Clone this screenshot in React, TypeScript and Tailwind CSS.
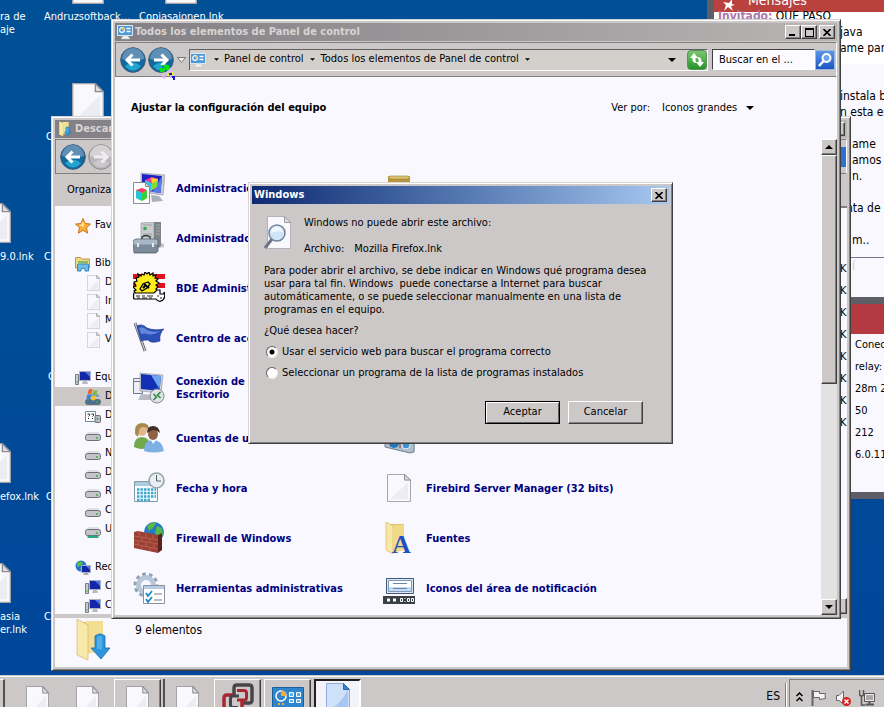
import type { ReactNode } from "react"

const frame =
  "absolute flex flex-col border border-t-[#d8d4d3] border-l-[#d8d4d3] border-r-[#404040] border-b-[#404040] bg-[#cdc8c8] p-[3px] shadow-[inset_1px_1px_0_#fff,inset_-1px_-1px_0_#808080]"
const raised =
  "border border-t-white border-l-white border-r-[#404040] border-b-[#404040] bg-[#cdc8c8] shadow-[inset_-1px_-1px_0_#808080]"
const raisedStack =
  "border border-t-white border-l-white border-r-[#404040] border-b-[#404040] bg-[#cdc8c8] shadow-[inset_-1px_-1px_0_#808080,2px_0_0_#cdc8c8,4px_0_0_#505050]"

function DocIcon({ className }: { className: string }) {
  return (
    <svg viewBox="0 0 24 30" preserveAspectRatio="none" className={className}>
      <path d="M.5.5h17l6 6v23H.5z" fill="#f9f9fd" stroke="#a2a2a8" />
      <path d="M3 27 21 9v18z" fill="#ececf3" />
      <path d="M17.500.5v6h6z" fill="#dcdce4" stroke="#8c8c94" />
    </svg>
  )
}

function PanelIcon({ className }: { className: string }) {
  return (
    <svg viewBox="0 0 16 16" className={className}>
      <path d="M.5 1.500h15v10H.5z" fill="#4f9ad6" stroke="#dceaf5" />
      <circle cx="5" cy="6" r="2.300" fill="none" stroke="#fff" strokeWidth="1.200" />
      <path d="M5 6V3.500A2.500 2.500 0 0 1 7.500 6z" fill="#f3b54a" />
      <path d="M9.500 4.500h4M9.500 7.500h4" stroke="#fff" strokeWidth="1.500" />
      <path d="M6 12h5l2 3H4z" fill="#eef1f5" stroke="#b8bec6" strokeWidth=".5" />
    </svg>
  )
}

function DownloadFolder({ className }: { className: string }) {
  return (
    <svg viewBox="0 0 36 44" className={className}>
      <path d="M8 4h19v30H8z" fill="#e3c768" />
      <path d="M11 3h17v30l-17 3z" fill="#f2df94" />
      <path d="m2 1 11 6v35L2 37z" fill="#f8e9a9" stroke="#cdb05a" strokeWidth=".6" />
      <path d="M20 18q5-4 10 0v12h5L26 41 16 30h4z" fill="#2c95dc" stroke="#1a6cb0" strokeWidth=".8" />
      <path d="M22 19q3-2 5 0v12h-5z" fill="#6dc0f0" opacity=".6" />
    </svg>
  )
}

function Caret({ className = "" }: { className?: string }) {
  return (
    <svg viewBox="0 0 8 4" className={`shrink-0 ${className}`}>
      <path d="M0 0h8L4 4z" fill="#000" />
    </svg>
  )
}

function NavArrow({ forward = false, disabled = false }: { forward?: boolean; disabled?: boolean }) {
  const base = disabled ? "#b9b6b9" : "#12699d"
  return (
    <button type="button" aria-label={forward ? "Adelante" : "Atrás"} className="h-[26px] w-[26px] shrink-0">
      <svg viewBox="0 0 26 26" className="h-full w-full">
        <circle cx="13" cy="13" r="12.300" fill={base} stroke={disabled ? "#8b888c" : "#3b5878"} />
        <path d="M2 12a11 11 0 0 1 22 0Q13 15 2 12z" fill={disabled ? "#d5d2d5" : "#5f8fb4"} />
        <path d="M5 19q8-7 16 0-8 9-16 0z" fill={disabled ? "#cbc8cb" : "#22a6cf"} />
        <g transform={forward ? "translate(26 0) scale(-1 1)" : undefined}>
          <path d="M20 13H8M12.500 7.500 7 13l5.500 5.500" fill="none" stroke={disabled ? "#efedf0" : "#fff"} strokeWidth="3" />
        </g>
      </svg>
    </button>
  )
}

function ComputerIcon() {
  return (
    <svg viewBox="0 0 16 16" className="h-4 w-4 shrink-0">
      <path d="M.5 4.500h3v10h-3z" fill="#c9ccd2" stroke="#777d88" />
      <path d="M1 12h2" stroke="#5db84c" />
      <path d="M4.500 1.500h11v9h-11z" fill="#1526a8" stroke="#aab2c2" />
      <path d="M10 2h5v5z" fill="#4d77e8" />
      <path d="M8 11h4l1 3H7z" fill="#b8bcc6" />
    </svg>
  )
}

function DriveIcon({ kind }: { kind: string }) {
  return (
    <svg viewBox="0 0 16 16" className="h-4 w-4 shrink-0">
      {kind !== "unknown" ? (
        <>
          <path d="m1 8 2-3h10l2 3z" fill={kind === "windows" ? "#7fa3b8" : "#dfe0e4"} />
          <rect
            x=".5"
            y={kind === "windows" ? "10.500" : "7.500"}
            width="15"
            height={kind === "windows" ? "5" : "6"}
            rx="2"
            fill={kind === "windows" ? "#4a7391" : "#c3c5cb"}
            stroke="#6c6f78"
          />
          <path d={kind === "windows" ? "M12 12v2" : "M12 10v2"} stroke="#3fae3c" strokeWidth="1.500" />
        </>
      ) : (
        <>
          <path d="M.5 3.500h10v10H.5z" fill="#fff" stroke="#6f8d98" />
          <path d="M2.500 6h2v1.500l-1 1M6.500 6h2v1.500l-1 1M3 10.500h1M7 10.500h1" fill="none" stroke="#222" />
          <rect x="10" y="7.500" width="5.500" height="7" rx="1" fill="#b7b9c0" stroke="#6c6f78" />
          <path d="M12.500 10v2" stroke="#3fae3c" strokeWidth="1.500" />
        </>
      )}
      {kind === "windows" && (
        <>
          <path d="M3.500 1q2-1.500 4-.5L6.500 5q-2-1-4 .5z" fill="#e8622a" />
          <path d="M8.500 1q2 1 4 0l-1 4.500q-2 1-4-.5z" fill="#7bbb3c" />
          <path d="M2.200 6.500q2-1.500 4-.5l-1 4.500q-2-1-4 .5z" fill="#3a86d8" />
          <path d="M7.200 6.500q2 1 4 0l-1 4.500q-2 1-4-.5z" fill="#f5c131" />
        </>
      )}
      {kind === "network" && <path d="M6.500 13h3v1h4v2h-11v-2h4z" fill="#2aa783" />}
    </svg>
  )
}

function TreeIcon({ kind }: { kind: string }) {
  switch (kind) {
    case "star":
      return (
        <svg viewBox="0 0 16 16" className="h-4 w-4 shrink-0">
          <path d="m8 .5 2.200 5 5.300.6-4 3.600 1.200 5.500L8 12.300l-4.700 2.900 1.200-5.500-4-3.600 5.300-.6z" fill="#f9ae3c" stroke="#c9761c" />
          <path d="m8 3 1.300 3.500L8 9 4 7l2.800-.4z" fill="#ffdf9a" />
        </svg>
      )
    case "library":
      return (
        <svg viewBox="0 0 16 16" className="h-4 w-4 shrink-0">
          <path d="M.5 1.500h5l1 1.500h8v9H.5z" fill="#f1d884" stroke="#b89b4a" />
          <path d="M3 5h10v2H3z" fill="#7dbf68" />
          <path d="M2.500 15V9q0-1 1-1h9q1 0 1 1v6H10v-2q-2-2-4 0v2z" fill="#6dbdea" stroke="#3585bf" />
        </svg>
      )
    case "doc":
      return <DocIcon className="h-4 w-[13px] shrink-0" />
    case "computer":
      return <ComputerIcon />
    case "globe":
      return (
        <svg viewBox="0 0 16 16" className="h-4 w-4 shrink-0">
          <circle cx="6" cy="6" r="5.500" fill="#2375c8" />
          <path d="M2 3q4-3 6 0L5 6 2 7zM5 8l4 1-2 3z" fill="#5ebd44" />
          <path d="M6.500 5.500h9v7h-9z" fill="#1526a8" stroke="#aab2c2" />
          <path d="M11 6h4v4z" fill="#4d77e8" />
          <path d="M9 13h4l1 2H8z" fill="#a9adb8" />
        </svg>
      )
    default:
      return <DriveIcon kind={kind} />
  }
}

function AppletIcon({ kind }: { kind: string }) {
  const cls = "h-8 w-8 shrink-0"
  switch (kind) {
    case "color":
      return (
        <svg viewBox="0 0 32 32" className={cls}>
          <path d="m8 1 24 2-2 20-22-3z" fill="#c8ccd6" stroke="#8c92a2" strokeWidth=".6" />
          <path d="m9 2 20 2-1.500 17L9 18z" fill="#1a22c4" />
          <path d="m29 4-1.500 17-8-1z" fill="#5a78e4" />
          <path d="m12 8 7-3 6 2-1 8-6 4-6-3z" fill="#f03c8c" />
          <path d="m18 6 7 1-1 8-5-3z" fill="#ffd21e" />
          <path d="m12 8 6 3v8l-6-3z" fill="#28c8f0" />
          <path d="m18 12 6-3v6l-6 4z" fill="#7ddc3c" />
          <path d="m18 23 8 1 4 5-11 1z" fill="#aab0bb" />
          <path d="M.5 10.500h12l4 4v17H.5z" fill="#fff" stroke="#8a8c94" />
          <path d="M12.500 10.500v4h4z" fill="#ddd" stroke="#8a8c94" />
          <path d="m3 18 6-2 5 2v8l-5 3-6-3z" fill="#f0e01e" />
          <path d="m3 18 6 3v8l-6-3z" fill="#1ec8dc" />
          <path d="m9 21 5-3v8l-5 3z" fill="#32d23c" />
          <path d="m3 18 6-2 5 2-5 3z" fill="#f03c78" />
        </svg>
      )
    case "devices":
      return (
        <svg viewBox="0 0 32 32" className={cls}>
          <path d="m16 28 15-3v-3l-5-2z" fill="#c4c6cc" />
          <path d="m8 1 13-1v27H8z" fill="#c9cdd0" stroke="#8a9094" strokeWidth=".6" />
          <path d="M21 0h7v24l-7 4z" fill="#7e858a" />
          <path d="M23 3h4M23 6h4M23 9h4M23 12h4" stroke="#a4aaae" />
          <path d="M10 3h9M10 12h9M10 14h9" stroke="#9aa0a4" />
          <circle cx="12" cy="6.500" r="1.800" fill="#39a845" />
          <path d="M9 18v-3q4-3 8 0v3" fill="none" stroke="#333" strokeWidth="1.300" />
          <path d="M0 18.500 3 17h20l2 1.500V29l-2 2H1z" fill="#7c8c9b" stroke="#46525e" strokeWidth=".7" />
          <path d="M.5 18.500 3 17.500h20l1.500 1v4H.5z" fill="#a9b8c6" />
          <path d="M5 21v4M20 21v4" stroke="#e6ebef" strokeWidth="2" />
        </svg>
      )
    case "bde":
      return (
        <svg viewBox="0 0 32 32" className={cls}>
          <path d="M0 2h32v5H0zM0 11h32v5H0z" fill="#e0141c" />
          <path
            d="m8 4 1-2 2 1 1-3 2 2 2-2 1 3 3-2v3l3-1-1 3 3 1-2 2 3 2-3 2 2 2-2 2 1 3v2H3l-2-3 2-1-3-3 3-1-2-4 3-1-1-3 3-1-1-3z"
            fill="#ffec1c"
            stroke="#000"
            strokeWidth="1.200"
          />
          <path d="m7 17 3-5 5-2 2 2-3 4-5 3z" fill="#ffec1c" stroke="#000" strokeWidth="1.300" />
          <path d="m11 12 5 4M10 16l2-2" stroke="#000" strokeWidth="2" />
          <path d="M1 21h20l3-3h3v4h4v-2q2 4-1 8-4 3-7-1H1q-1-3 0-6z" fill="#fff" stroke="#000" strokeWidth="1.200" />
          <path d="M3 24h4M9 24h3M14 24h6M4 26h3M9 26h5M16 26h3M24 24h2M27 26h2" stroke="#222" />
        </svg>
      )
    case "flag":
      return (
        <svg viewBox="0 0 32 32" className={cls}>
          <path d="m2 1 10 28" stroke="#6d7178" strokeWidth="3" />
          <path d="m2 1 10 28" stroke="#d4d6da" />
          <path d="M4 4q5-3 10 2 7 3 17 1-5 4-4 12-9 3-12-1-4 0-7 1z" fill="#2b50b8" stroke="#1a348c" strokeWidth=".6" />
          <path d="M6 6q4-2 8 2 6 3 13 1-7 5-13 3-3-1-6 0z" fill="#7b9ce8" opacity=".7" />
        </svg>
      )
    case "remote":
      return (
        <svg viewBox="0 0 32 32" className={cls}>
          <path d="M.5 6.500h9v15h-9z" fill="#eef0f8" stroke="#6e7694" />
          <path d="M1 9.500h8" stroke="#6e7694" />
          <path d="m7 1 23 2-2 18-21-2z" fill="#ccd0da" stroke="#8c92a2" strokeWidth=".6" />
          <path d="m8 2 20 2-1.500 15L8 17z" fill="#1230b4" />
          <path d="m18 3 10 1-1.500 13z" fill="#6fa4f0" />
          <path d="m8 22 14 1v5H5z" fill="#b8bcc6" />
          <circle cx="24" cy="24" r="7" fill="#dfe3e6" stroke="#7f868c" />
          <path d="m20.500 22 3 3-3 3M27.500 20l-3 3 3 3" fill="none" stroke="#2d8c46" strokeWidth="1.600" />
        </svg>
      )
    case "users":
      return (
        <svg viewBox="0 0 32 32" className={cls}>
          <path d="M1 25q0-10 8-10t8 10q-8 4-16 0z" fill="#74a84c" />
          <ellipse cx="9" cy="8" rx="5" ry="6" fill="#e2b78f" />
          <path d="M2 12Q1 1 9 1t7 8q-1-3-5-4-5 0-5 5l-1 5z" fill="#a98a4c" />
          <path d="M11 29q0-11 9-11t11 11q-10 3-20 0z" fill="#7fb0e4" />
          <ellipse cx="20" cy="12" rx="5" ry="6" fill="#8f6044" />
          <path d="M14 11q0-7 6-7t7 7q-3-3-6-3t-7 3z" fill="#3c3029" />
          <path d="m18 18 2 4 3-4z" fill="#fff" />
        </svg>
      )
    case "clock":
      return (
        <svg viewBox="0 0 32 32" className={cls}>
          <path d="M1.500 9.500h23v20h-23z" fill="#f4fbff" stroke="#8799a6" />
          <path d="M2 10h22v4H2z" fill="#a8cede" />
          <path d="M4 17.500h19M4 21h19M4 24.500h19M4 28h14" stroke="#3aa6cc" strokeWidth="2.400" strokeDasharray="2.400 1.100" />
          <circle cx="23.500" cy="8.500" r="7.500" fill="#e9eef2" stroke="#9ba3aa" strokeWidth="1.600" />
          <path d="M23.500 3v6h4.500" fill="none" stroke="#526470" />
        </svg>
      )
    case "firewall":
      return (
        <svg viewBox="0 0 32 32" className={cls}>
          <circle cx="21" cy="10" r="10" fill="#2478c4" />
          <path d="M14 4q5-5 9-3l-3 5-4 3zM24 4l5 2 1 7-4 3-4-5z" fill="#55b948" />
          <path d="m1 10 4-1 20 4v18L1 26z" fill="#9c4034" />
          <path d="m25 13 4-2v17l-4 3z" fill="#5e221c" />
          <path d="m1 14 24 4M1 18l24 4M1 22l24 5M6 10v5M13 11v5M20 13v4M9 16v4M17 17v4M5 19v4M13 20v5M21 22v4M9 24v4M17 25v4" stroke="#b8685a" strokeWidth=".8" />
        </svg>
      )
    case "tools":
      return (
        <svg viewBox="0 0 32 32" className={cls}>
          <circle cx="13" cy="13" r="10.500" fill="none" stroke="#8f9fb2" strokeWidth="4" strokeDasharray="3.500 3" />
          <circle cx="13" cy="13" r="7.500" fill="none" stroke="#b7c6d8" strokeWidth="5" />
          <path d="M10.500 13.500h21v18h-21z" fill="#fff" stroke="#8b909c" />
          <path d="M11 14h20v3H11z" fill="#b9cbe0" />
          <path d="m13 21 2 3 4-5M13 27l2 3 4-5" fill="none" stroke="#1c86c8" strokeWidth="1.800" />
          <path d="M21 22h8M21 28h8" stroke="#777d88" />
        </svg>
      )
    case "box":
      return (
        <svg viewBox="0 0 32 32" className={cls}>
          <path d="M5 5q0-1 2-1h18q2 0 2 1v24H5z" fill="#b8963e" />
          <path d="M5 6q0-2 3-2h16q3 0 3 2l-3 1H8z" fill="#dcc478" stroke="#9c7c2c" strokeWidth=".6" />
        </svg>
      )
    case "scanner":
      return (
        <svg viewBox="0 0 32 32" className={cls}>
          <path d="m2 20 27-2q3 1 2 12l-4 1L2 25z" fill="#aebccb" stroke="#73808e" />
          <circle cx="11" cy="21" r="5" fill="#2378b8" />
          <circle cx="23" cy="23" r="4" fill="#3c8fd0" stroke="#e7f0f7" />
          <path d="M17 18v8" stroke="#8e3c3c" />
        </svg>
      )
    case "fonts":
      return (
        <svg viewBox="0 0 32 32" className={cls}>
          <path d="M6 2h15v26H6z" fill="#e2c665" />
          <path d="m3 0 7 4v28l-7-4z" fill="#f8e8a6" stroke="#cdb05a" strokeWidth=".6" />
          <path d="M10 3h11v25l-11 3z" fill="#f0da88" />
          <text x="9" y="31" fill="#1f4fc4" fontFamily="Liberation Serif, serif" fontSize="26" fontWeight="bold">
            A
          </text>
        </svg>
      )
    case "tray":
      return (
        <svg viewBox="0 0 32 32" className={cls}>
          <path d="M3.500 6.500h27v15h-27z" fill="#dce9f6" stroke="#3d5878" />
          <path d="M5.500 8.500h23v11h-23z" fill="#fff" stroke="#7c98b8" />
          <path d="M6 15h22v4H6z" fill="#c4dcf4" />
          <path d="M10 11.500h14M10 16.500h14" stroke="#6b89ac" />
          <path d="M0 24h32v8H0z" fill="#3a3e46" />
          <path d="M4 26.500h3v3H4zM10 26.500h3v3h-3z" fill="#fff" />
          <path d="M17.500 26.500h2v3h-2zM24.500 26.500h2v3h-2zM28.500 26.500h2v3h-2zM22 26v1M22 29v1" fill="none" stroke="#fff" />
        </svg>
      )
    case "doc":
      return (
        <span className="flex w-8 shrink-0 justify-center">
          <DocIcon className="h-7 w-6" />
        </span>
      )
    default:
      return <span className={cls} />
  }
}

const desktopItems = [
  { doc: "", label: ["ra de", "aje"], text: "left-0 top-[10px]" },
  { doc: "left-[72px] top-[-36px]", label: ["Andruzsoftback..."], text: "left-[44px] top-[10px]" },
  { doc: "left-[165px] top-[-36px]", label: ["Copiasajonen.lnk"], text: "left-[139px] top-[10px]" },
  { doc: "left-[72px] top-[83px]", label: ["C"], text: "left-[46px] top-[130px]" },
  { doc: "left-[-21px] top-[203px]", label: ["9.0.lnk"], text: "left-0 top-[250px]" },
  { doc: "", label: ["C"], text: "left-[44px] top-[250px]" },
  { doc: "", label: ["C"], text: "left-[48px] top-[370px]" },
  { doc: "left-[-21px] top-[443px]", label: ["efox.lnk"], text: "left-0 top-[490px]" },
  { doc: "", label: ["C"], text: "left-[46px] top-[490px]" },
  { doc: "left-[-21px] top-[563px]", label: ["asia", "er.lnk"], text: "left-0 top-[610px]" },
  { doc: "", label: ["C"], text: "left-[44px] top-[610px]" },
]

const tree = [
  { icon: "star", label: "Favoritos", level: 0 },
  null,
  { icon: "library", label: "Bibliotecas", level: 0 },
  { icon: "doc", label: "D", level: 1 },
  { icon: "doc", label: "Im", level: 1 },
  { icon: "doc", label: "M", level: 1 },
  { icon: "doc", label: "V", level: 1 },
  null,
  { icon: "computer", label: "Equipo", level: 0 },
  { icon: "windows", label: "D", level: 1, selected: true },
  { icon: "unknown", label: "D", level: 1 },
  { icon: "drive", label: "D", level: 1 },
  { icon: "drive", label: "N", level: 1 },
  { icon: "drive", label: "D", level: 1 },
  { icon: "drive", label: "R", level: 1 },
  { icon: "drive", label: "C", level: 1 },
  { icon: "network", label: "U", level: 1 },
  null,
  { icon: "globe", label: "Red", level: 0 },
  { icon: "computer", label: "C", level: 1 },
  { icon: "computer", label: "C", level: 1 },
]

const applets = [
  { icon: "color", label: "Administració" },
  { icon: "box", label: "" },
  { icon: "devices", label: "Administrado" },
  { icon: "", label: "" },
  { icon: "bde", label: "BDE Administ" },
  { icon: "", label: "" },
  { icon: "flag", label: "Centro de acc" },
  { icon: "", label: "" },
  { icon: "remote", label: "Conexión de\nEscritorio" },
  { icon: "", label: "" },
  { icon: "users", label: "Cuentas de us" },
  { icon: "scanner", label: "" },
  { icon: "clock", label: "Fecha y hora" },
  { icon: "doc", label: "Firebird Server Manager (32 bits)" },
  { icon: "firewall", label: "Firewall de Windows" },
  { icon: "fonts", label: "Fuentes" },
  { icon: "tools", label: "Herramientas administrativas" },
  { icon: "tray", label: "Iconos del área de notificación" },
]

const messages = [
  { text: "java", indent: "pl-[126px]" },
  { text: "ame para", indent: "pl-[126px]" },
  { text: "", indent: "" },
  { text: "", indent: "" },
  { text: "instala bi", indent: "pl-[126px]" },
  { text: "n esta es", indent: "pl-[126px]" },
  { text: "", indent: "" },
  { text: "ame", indent: "pl-[138px]" },
  { text: "amos", indent: "pl-[138px]" },
  { text: "n.", indent: "pl-[138px]" },
  { text: "", indent: "" },
  { text: "nta de", indent: "pl-[132px]" },
  { text: "", indent: "" },
  { text: "m..", indent: "pl-[138px]" },
]

const session = ["Conectado", "relay:", "28m 29s", "50", "212", "6.0.11"]

function DesktopIcons() {
  return (
    <>
      {desktopItems.map((item, i) => (
        <div key={i} className="text-white">
          {item.doc && <DocIcon className={`absolute h-10 w-8 ${item.doc}`} />}
          <p className={`absolute leading-[13px] whitespace-nowrap ${item.text}`}>
            {item.label.map((line) => (
              <span key={line} className="block">
                {line}
              </span>
            ))}
          </p>
        </div>
      ))}
    </>
  )
}

function MessagesPanel() {
  return (
    <aside className="absolute top-0 right-0 left-[707px] flex h-[499px] flex-col overflow-hidden border-b-[7px] border-l-[7px] border-[#5e5e66] bg-[#f9f8ff] text-xs whitespace-nowrap">
      <header className="flex h-3 shrink-0 items-end gap-3 overflow-hidden bg-[#b9423f] pl-2 text-white">
        <svg viewBox="0 0 14 14" className="h-[14px] w-[14px] shrink-0">
          <path d="m1 4 6 1 3-4v5l3 1-4 1 2 5-5-4-4 4 2-6z" fill="#fff" />
        </svg>
        <span className="text-sm leading-6">Mensajes</span>
      </header>
      <div className="h-[246px] shrink-0 border-b border-[#77778c] bg-linear-to-b from-white from-[52px] to-[#f9f8ff] to-[52px] leading-4">
        <p className="-mt-1 pl-1">
          <strong className="text-[#a878a8]">Invitado:</strong> QUE PASO
        </p>
        {messages.map((m, i) => (
          <p key={i} className={`h-4 ${m.indent}`}>
            {m.text}
          </p>
        ))}
      </div>
      <p className="h-[39px] shrink-0 pl-[138px] text-[#ccc]">í</p>
      <div className="h-[7px] shrink-0 bg-[#5e5e66]" />
      <div className="h-[30px] shrink-0 bg-[#b23a40]" />
      <ul className="pl-[141px] text-[11px] leading-[22px]">
        {session.map((line) => (
          <li key={line}>{line}</li>
        ))}
      </ul>
    </aside>
  )
}

function CloseButton({ className = "" }: { className?: string }) {
  return (
    <button type="button" aria-label="Cerrar" className={`flex h-[14px] w-4 items-center justify-center ${raised} ${className}`}>
      <svg viewBox="0 0 8 7" className="h-[7px] w-2">
        <path d="m.5 0 7 7m0-7-7 7" stroke="#000" strokeWidth="1.600" />
      </svg>
    </button>
  )
}

function TitleBar({ icon, title }: { icon: ReactNode; title: string }) {
  return (
    <div className="flex h-[18px] shrink-0 items-center gap-0.5 bg-linear-to-r from-[#828084] to-[#b8b5b4] px-0.5 font-bold text-[#d8d4d3]">
      {icon}
      <span className="flex-1 whitespace-nowrap">{title}</span>
      <div className="flex">
        <button type="button" aria-label="Minimizar" className={`flex h-[14px] w-4 items-end pb-[2px] pl-[3px] ${raised}`}>
          <span className="h-[2px] w-[6px] bg-black" />
        </button>
        <button type="button" aria-label="Maximizar" className={`flex h-[14px] w-4 items-center justify-center ${raised}`}>
          <span className="h-[9px] w-[9px] border border-t-2 border-black" />
        </button>
        <CloseButton className="ml-0.5" />
      </div>
    </div>
  )
}

function DownloadsWindow() {
  return (
    <section className={`${frame} top-[116px] left-[51px] h-[555px] w-[800px]`}>
      <TitleBar icon={<DownloadFolder className="h-4 w-4" />} title="Descargas" />
      <div className="mt-px flex h-[35px] shrink-0 items-center gap-0.5 border border-t-[#808080] border-l-[#808080] border-r-white border-b-[#808080] pl-1">
        <NavArrow />
        <NavArrow forward disabled />
        <span className="flex-1" />
        <button type="button" aria-label="Buscar" className="h-5 w-5 bg-[#2f6fd0]" />
      </div>
      <div className="flex h-8 shrink-0 items-center pl-3">Organizar</div>
      <div className="flex h-[408px] shrink-0 overflow-hidden bg-[#f9f8ff]">
        <nav className="w-[200px] pt-[10px]">
          <ul>
            {tree.map((node, i) =>
              node ? (
                <li
                  key={i}
                  className={`flex h-[19px] items-center gap-1 ${node.level ? "pl-[30px]" : "pl-5"} ${node.selected ? "bg-[#cdc8c8]" : ""}`}
                >
                  <span className="flex w-4 justify-center">
                    <TreeIcon kind={node.icon} />
                  </span>
                  {node.label}
                </li>
              ) : (
                <li key={i} className="h-[19px]" />
              ),
            )}
          </ul>
        </nav>
        <div className="flex-1" />
        <div className="flex w-[7px] flex-col overflow-hidden border-t-2 border-[#808080] pt-[50px]">
          {Array.from({ length: 8 }, (_, i) => (
            <span key={i} className="h-[22px] shrink-0 leading-[22px]">
              K
            </span>
          ))}
          <span className={`mt-auto h-4 ${raised}`} />
        </div>
      </div>
      <footer className="flex flex-1 items-start gap-6 border-t-4 border-[#cdc8c8] bg-[#f9f8ff] pl-5">
        <DownloadFolder className="h-11 w-9" />
        <span className="pt-1 text-xs">9 elementos</span>
      </footer>
    </section>
  )
}

function ControlPanelWindow() {
  return (
    <section className={`${frame} top-[19px] left-[111px] h-[600px] w-[730px]`}>
      <TitleBar icon={<PanelIcon className="h-4 w-4" />} title="Todos los elementos de Panel de control" />
      <div className="mt-px flex h-[35px] shrink-0 items-center border border-t-[#808080] border-l-[#808080] border-r-white border-b-[#808080] pr-px pl-1">
        <NavArrow />
        <span className="w-0.5" />
        <NavArrow forward />
        <svg viewBox="0 0 9 6" className="mx-[3px] h-[6px] w-[9px] shrink-0">
          <path d="M.5.5h8l-4 5z" fill="#eee" stroke="#777" />
        </svg>
        <div className="flex h-[22px] flex-1 items-center border border-t-[#606060] border-l-[#606060] border-r-white border-b-white bg-[#d3cfca] whitespace-nowrap">
          <PanelIcon className="h-4 w-4 shrink-0" />
          <Caret className="mr-[5px] ml-2 h-[3px] w-[5px]" />
          <span>Panel de control</span>
          <Caret className="mx-1.5 h-[3px] w-[5px]" />
          <span>Todos los elementos de Panel de control</span>
          <Caret className="mx-1.5 h-[3px] w-[5px]" />
          <Caret className="mr-[11px] ml-auto h-1 w-2" />
          <button type="button" aria-label="Actualizar" className="h-5 w-5 rounded-sm border border-[#57945a] bg-linear-to-b from-[#7cc66f] to-[#1d9426]">
            <svg viewBox="0 0 18 18" className="h-full w-full">
              <path d="m6 2 4 5H7.500v2q0 2 2 2.500Q4.500 13 4.500 8V7H2z" fill="#fff" />
              <path d="m12 16-4-5h2.500V9q0-2-2-2.500Q13.500 5 13.500 10v1H16z" fill="#fff" />
            </svg>
          </button>
        </div>
        <input
          type="text"
          aria-label="Buscar"
          defaultValue="Buscar en el ..."
          className="ml-1 h-[21px] w-[103px] border border-t-[#404040] border-l-[#404040] border-r-white border-b-white bg-[#fcfbff] px-[6px]"
        />
        <button type="button" aria-label="Iniciar búsqueda" className="h-5 w-5 border border-[#9bb9e0] bg-linear-to-b from-[#5d95e4] to-[#1c55c4]">
          <svg viewBox="0 0 18 18" className="h-full w-full">
            <circle cx="10.500" cy="7" r="4" fill="#6fa5ea" stroke="#fff" strokeWidth="2" />
            <path d="m7.500 10-4.500 5" stroke="#fff" strokeWidth="2.500" />
          </svg>
        </button>
      </div>
      <div className="flex min-h-0 flex-1 flex-col bg-[#f9f8ff]">
        <header className="flex h-[62px] shrink-0 items-center pr-[83px] pl-4">
          <h1 className="flex-1 font-bold">Ajustar la configuración del equipo</h1>
          <label htmlFor="view">Ver por:</label>
          <select id="view" className="ml-3 appearance-none">
            <option>Iconos grandes</option>
          </select>
          <Caret className="ml-2 h-1 w-2" />
        </header>
        <div className="flex min-h-0 flex-1">
          <div className="grid flex-1 auto-rows-[50px] grid-cols-[250px_1fr] overflow-hidden pt-6 pl-[18px]">
            {applets.map((item, i) =>
              item.label ? (
                <a key={i} href="#" className="flex items-center gap-[11px] leading-[13px] font-bold whitespace-pre text-[#000080]">
                  <AppletIcon kind={item.icon} />
                  {item.label}
                </a>
              ) : (
                <div key={i} className="flex items-center">
                  <AppletIcon kind={item.icon} />
                </div>
              ),
            )}
          </div>
          <div className="flex w-4 flex-col bg-[#e4e1e3]">
            <button type="button" aria-label="Subir" className={`flex h-4 items-center justify-center ${raised}`}>
              <Caret className="h-1 w-2 rotate-180" />
            </button>
            <div className={`h-[229px] ${raised}`} />
            <button type="button" aria-label="Bajar" className={`mt-auto flex h-4 items-center justify-center ${raised}`}>
              <Caret className="h-1 w-2" />
            </button>
          </div>
        </div>
      </div>
    </section>
  )
}

const radio =
  "h-3 w-3 appearance-none rounded-full border border-t-[#606060] border-l-[#606060] border-r-[#eee] border-b-[#eee] bg-white checked:bg-[radial-gradient(circle,#000_2px,#fff_3px)]"

function OpenFileDialog() {
  return (
    <section role="dialog" aria-label="Windows" className={`${frame} top-[182px] left-[248px] h-[262px] w-[425px]`}>
      <div className="flex h-[18px] shrink-0 items-center justify-between bg-linear-to-r from-[#0f2a72] to-[#a6c8f0] px-0.5 font-bold text-white">
        Windows
        <CloseButton />
      </div>
      <form className="flex flex-1 flex-col px-3 pt-3">
        <div className="flex gap-3">
          <svg viewBox="0 0 28 34" className="h-[34px] w-7">
            <path d="M3.500.5h17l6 6v26h-23z" fill="#f8f8fd" stroke="#b2b2bc" />
            <path d="M20.500.5v6h6z" fill="#dcdce6" stroke="#9a9aa6" />
            <path d="m8 23-7 9" stroke="#6c7684" strokeWidth="3" />
            <circle cx="13" cy="17" r="8" fill="#cfe4f7" stroke="#73839a" strokeWidth="1.500" />
            <path d="M7 17a6 6 0 0 1 12-1q-6-2-12 1z" fill="#f0f8ff" />
          </svg>
          <div className="leading-[13px]">
            <p>Windows no puede abrir este archivo:</p>
            <p className="mt-[13px] flex gap-2.5">
              <span>Archivo:</span>
              <span>Mozilla Firefox.lnk</span>
            </p>
          </div>
        </div>
        <p className="mt-[9px] leading-[13px] whitespace-pre">
          {
            "Para poder abrir el archivo, se debe indicar en Windows qué programa desea\nusar para tal fin. Windows  puede conectarse a Internet para buscar\nautomáticamente, o se puede seleccionar manualmente en una lista de\nprogramas en el equipo."
          }
        </p>
        <fieldset className="mt-2">
          <legend className="leading-[13px]">¿Qué desea hacer?</legend>
          <div className="mt-2 flex flex-col gap-2 pl-0.5">
            <label className="flex items-center gap-1 leading-[13px]">
              <input type="radio" name="action" defaultChecked className={radio} />
              Usar el servicio web para buscar el programa correcto
            </label>
            <label className="flex items-center gap-1 leading-[13px]">
              <input type="radio" name="action" className={radio} />
              Seleccionar un programa de la lista de programas instalados
            </label>
          </div>
        </fieldset>
        <div className="mt-auto mb-4 flex justify-end gap-2 pr-[14px]">
          <button type="button" className="h-[23px] w-[75px] border border-black bg-[#cdc8c8] shadow-[inset_1px_1px_0_#fff,inset_-1px_-1px_0_#606060]">
            Aceptar
          </button>
          <button type="button" className={`h-[23px] w-[75px] ${raised}`}>
            Cancelar
          </button>
        </div>
      </form>
    </section>
  )
}

function BusyPointer() {
  return (
    <svg viewBox="0 0 18 16" className="absolute top-[64px] left-[159px] h-4 w-[18px]" shapeRendering="crispEdges">
      <path d="M2 1h8l1 3-2 3-3-1-2 2H1z" fill="#0ce01a" />
      <path d="M3 2h2v2H3z" fill="#0a7ad0" />
      <path d="m9 6 3-3 1 3-2 4zM2 13l4-2v4zM10 13l2-2v4z" fill="#d8b8f8" />
      <path d="M10 9h3v2h-3zM13 12h3v4h-2v-2h-1z" fill="#1414c8" />
      <path d="M8 9h2v3H8zM13 8h2v3h-2z" fill="#f4f01c" />
    </svg>
  )
}

const tasks = [
  { kind: "doc", name: "Documento", style: "pt-[7px]" },
  { kind: "doc", name: "Documento", style: "pt-[7px]" },
  { kind: "doc", name: "Documentos", style: `pt-[6px] ${raisedStack}` },
  { kind: "doc", name: "Documento", style: "pt-[7px]" },
  { kind: "vnc", name: "VNC", style: `pt-[3px] ${raised}` },
  { kind: "panel", name: "Panel de control", style: `pt-[3px] ${raised}` },
  {
    kind: "active",
    name: "Archivo",
    style: "border-2 border-t-[#202020] border-l-[#202020] border-r-white border-b-white bg-[#f4f3fa] pt-px",
  },
]

function TaskIcon({ kind }: { kind: string }) {
  switch (kind) {
    case "vnc":
      return (
        <svg viewBox="0 0 32 32" className="h-8 w-8">
          <path d="M12 14V5q0-3 3-3h12q3 0 3 3v12q0 3-3 3h-6" fill="none" stroke="#45454a" strokeWidth="3.500" />
          <path d="M11 12H5q-3 0-3 3v12q0 3 3 3h12q3 0 3-3V16" fill="none" stroke="#a92733" strokeWidth="3.500" />
          <path d="M15 7.500h7q2.500 0 2.500 2.500v5q0 2-2.500 2h-7" fill="none" stroke="#a92733" strokeWidth="3" />
          <path d="M17 13h-6q-2.500 0-2.500 2.500v6q0 3 2.500 3h5" fill="none" stroke="#45454a" strokeWidth="3" />
        </svg>
      )
    case "panel":
      return (
        <svg viewBox="0 0 32 32" className="mt-1 h-8 w-8">
          <path d="M.5.5h31v22H.5z" fill="#2f86cc" stroke="#1d5f9c" />
          <circle cx="9" cy="9" r="5" fill="none" stroke="#fff" strokeWidth="1.500" />
          <path d="M9 9V3.500A5.500 5.500 0 0 1 14.500 9z" fill="#f5ab34" />
          <path d="M17.500 5.500h4v4h-4zM24.500 5.500h4v4h-4zM17.500 12.500h4v3h-4zM24.500 12.500h4v3h-4z" fill="#61aee4" stroke="#fff" />
          <path d="M6 17h2M10 17h2" stroke="#f5ab34" strokeWidth="2" />
          <path d="M12 20h8v5h-8z" fill="#eef1f5" />
        </svg>
      )
    case "active":
      return (
        <svg viewBox="0 0 24 30" className="h-8 w-6">
          <path d="M.5.5h17l6 6v23H.5z" fill="#cfe0f9" stroke="#93aede" />
          <path d="M2 28Q16 20 22 6v22z" fill="#a9c5f2" />
          <path d="M17.500.5v6h6z" fill="#3a83d6" stroke="#2a68b4" />
        </svg>
      )
    default:
      return <DocIcon className="h-8 w-[23px]" />
  }
}

function Taskbar() {
  return (
    <footer className="flex h-8 shrink-0 overflow-hidden border-t border-[#cdc8c8] bg-[#cdc8c8] pt-[3px] shadow-[inset_0_1px_0_#fff]">
      <div className="mr-[9px] w-[5px] border-t border-r-2 border-t-white border-r-[#505050]" />
      <div className="flex flex-1 gap-[3px]">
        {tasks.map((task, i) => (
          <button key={i} type="button" aria-label={task.name} className={`flex h-9 w-[47px] justify-center ${task.style}`}>
            <TaskIcon kind={task.kind} />
          </button>
        ))}
      </div>
      <span className="pt-[9px] pr-[5px] text-xs leading-4">ES</span>
      <div className="mt-1 mr-0.5 w-0.5 border-l border-[#808080] bg-white" />
      <div className="flex w-[95px] items-start gap-2 border-t border-l border-[#808080] pt-[10px] pl-1.5">
        <svg viewBox="0 0 7 10" className="mt-0.5 h-[10px] w-[7px] shrink-0">
          <path d="m.5 4 3-3 3 3M.5 9l3-3 3 3" fill="none" stroke="#000" strokeWidth="1.500" />
        </svg>
        <svg viewBox="0 0 16 16" className="h-4 w-4 shrink-0">
          <path d="M1.500 0v16" stroke="#666" strokeWidth="2" />
          <path d="M2.500 1.500h6v2h6q-1 2 0 5l-6 1v-2h-6z" fill="#f4f4f8" stroke="#666" />
        </svg>
        <svg viewBox="0 0 16 16" className="h-4 w-4 shrink-0">
          <path d="M1.500 5.500h2.500L8.500 1v13L4 10.500H1.500z" fill="#f4f4f8" stroke="#666" />
          <circle cx="11.500" cy="11.500" r="4.500" fill="#d42222" />
          <path d="m9.500 9.500 4 4m0-4-4 4" stroke="#fff" strokeWidth="1.500" />
        </svg>
        <svg viewBox="0 0 16 16" className="h-4 w-4 shrink-0">
          <path d="M5.500 3.500h10v8h-10z" fill="#a8a6aa" stroke="#555" />
          <path d="M6.500 4.500h8v6h-8z" fill="none" stroke="#eee" />
          <path d="M7 14.500h8M10.500 12v2" stroke="#555" strokeWidth="2" />
          <path d="M.5 0v4q0 2 2 2t2-2V0M2.500 6v9h4" fill="none" stroke="#555" strokeWidth="1.500" />
        </svg>
      </div>
    </footer>
  )
}

export default function App() {
  return (
    <div className="flex h-screen flex-col overflow-hidden bg-linear-to-b from-[#005096] to-[#00469a] font-['DejaVu_Sans_Condensed','DejaVu_Sans',sans-serif] text-[11px] text-black">
      <main className="relative flex-1 overflow-hidden">
        <DesktopIcons />
        <MessagesPanel />
        <DownloadsWindow />
        <ControlPanelWindow />
        <OpenFileDialog />
        <BusyPointer />
      </main>
      <Taskbar />
    </div>
  )
}
